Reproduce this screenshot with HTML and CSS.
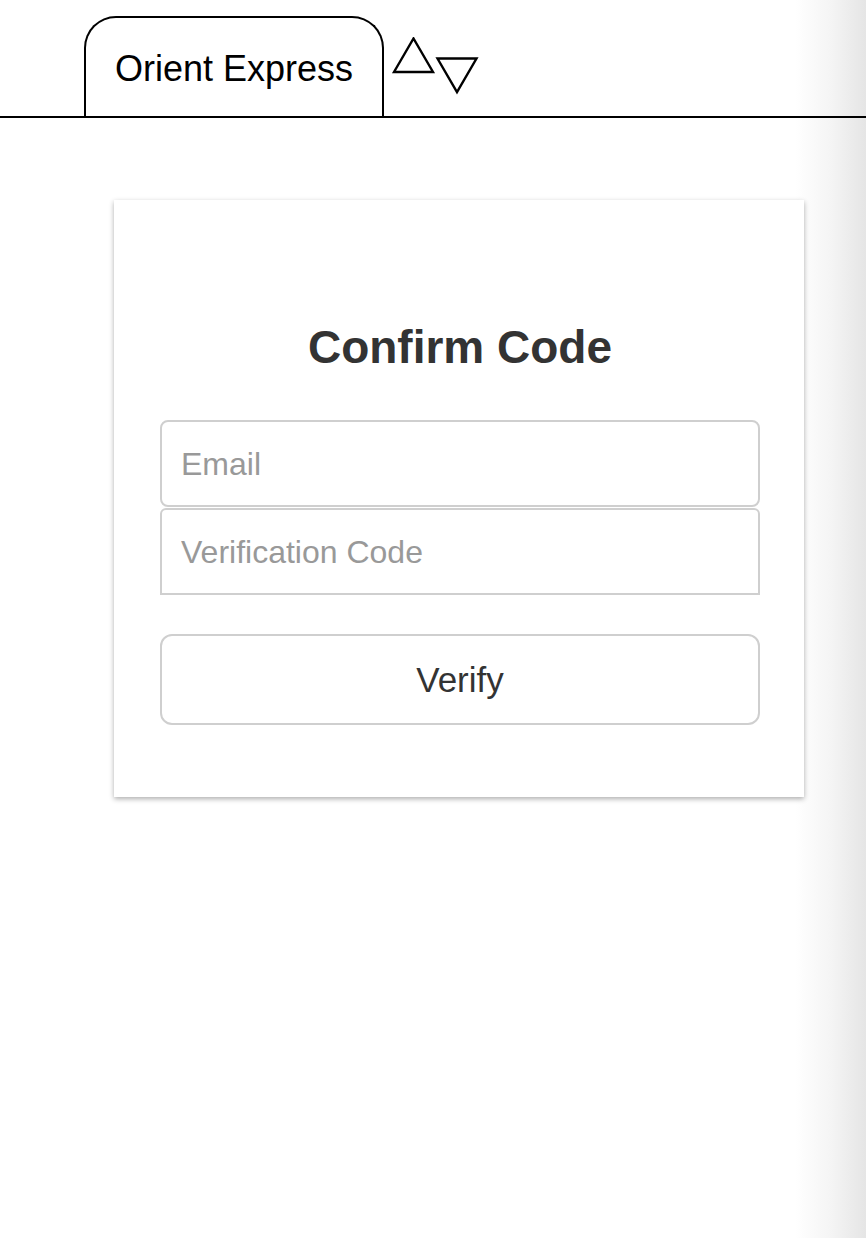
FILE: index.html
```html
<!DOCTYPE html>
<html>
<head>
<meta charset="utf-8">
<link rel="stylesheet" href="styles.css">
</head>
<body>
<header class="topbar">
  <div class="tab">Orient Express</div>
  <svg class="sorter" width="90" height="60" viewBox="0 0 90 60">
    <polygon points="3,35 22.5,1.5 42,35" fill="none" stroke="#000" stroke-width="2.4" stroke-linejoin="miter"/>
    <polygon points="46.5,21.5 85.5,21.5 66,55" fill="none" stroke="#000" stroke-width="2.4" stroke-linejoin="miter"/>
  </svg>
</header>
<main class="main">
  <section class="card">
    <h1 class="title">Confirm Code</h1>
    <div class="fields">
      <input class="field field-email" type="text" placeholder="Email">
      <input class="field field-code" type="text" placeholder="Verification Code">
    </div>
    <button class="verify">Verify</button>
  </section>
</main>
</body>
</html>
```
FILE: styles.css
```css
html, body {
  margin: 0;
  padding: 0;
}
body {
  min-height: 1238px;
  font-family: "Liberation Sans", Arial, Helvetica, sans-serif;
  background: linear-gradient(to right, #ffffff 0, #ffffff 795px, #f5f5f5 830px, #e5e5e5 866px);
}
.topbar {
  display: flex;
  align-items: flex-start;
  height: 116px;
  border-bottom: 2px solid #000;
}
.tab {
  margin-left: 84px;
  margin-top: 16px;
  box-sizing: border-box;
  width: 300px;
  height: 100px;
  border: 2px solid #000;
  border-bottom: none;
  border-radius: 32px 32px 0 0;
  font-size: 36px;
  line-height: 36px;
  padding-top: 33px;
  text-align: center;
  color: #000;
  background: #fff;
}
.sorter {
  margin-left: 7px;
  margin-top: 37px;
}
.main {
  padding-top: 82px;
}
.card {
  box-sizing: border-box;
  width: 690px;
  margin-left: 114px;
  padding: 119px 44px 72px 46px;
  background: #fff;
  box-shadow: 0 2px 5px rgba(0, 0, 0, 0.32);
}
.title {
  margin: 0 0 45px;
  font-size: 46px;
  line-height: 56px;
  font-weight: bold;
  text-align: center;
  color: #333;
}
.fields {
  display: flex;
  flex-direction: column;
  gap: 1px;
}
.field {
  box-sizing: border-box;
  width: 600px;
  height: 87px;
  margin: 0;
  padding: 2px 19px 0;
  border: 2px solid #cfcfcf;
  font-family: "Liberation Sans", Arial, Helvetica, sans-serif;
  font-size: 32px;
  color: #333;
  background: #fff;
  outline: none;
}
.field::placeholder {
  color: #999;
}
.field-email {
  border-radius: 8px;
}
.field-code {
  border-radius: 6px 6px 0 0;
}
.verify {
  display: block;
  box-sizing: border-box;
  width: 600px;
  height: 91px;
  margin-top: 39px;
  border: 2px solid #cfcfcf;
  border-radius: 12px;
  background: #fff;
  font-family: "Liberation Sans", Arial, Helvetica, sans-serif;
  font-size: 35px;
  color: #333;
  cursor: pointer;
}
```
